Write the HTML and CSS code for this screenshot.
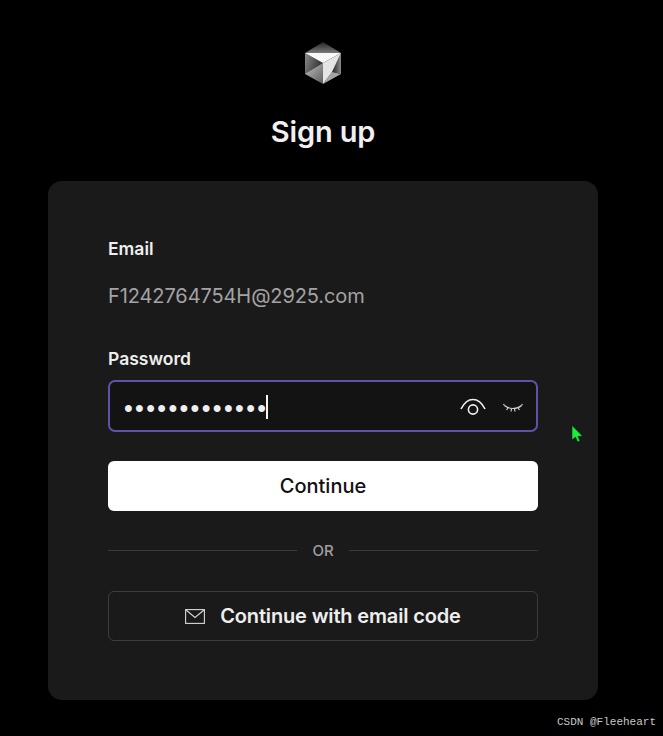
FILE: index.html
```html
<!DOCTYPE html>
<html lang="en">
  <head>
    <meta charset="UTF-8" />
    <meta name="viewport" content="width=device-width, initial-scale=1.0" />
    <title>Sign up</title>
    <link rel="stylesheet" href="styles.css">
  </head>
  <body>
    <div class="page">
      <svg class="logo" width="40" height="44" viewBox="0 0 40 44">
        <defs>
          <linearGradient id="leftFace" x1="0" y1="0" x2="1" y2="0.4">
            <stop offset="0" stop-color="#8c8c8c" />
            <stop offset="1" stop-color="#2e2e2e" />
          </linearGradient>
          <linearGradient id="topFace" x1="0" y1="0" x2="0" y2="1">
            <stop offset="0" stop-color="#222" />
            <stop offset="1" stop-color="#7a7a7a" />
          </linearGradient>
          <linearGradient id="rightFace" x1="0" y1="0" x2="1" y2="0">
            <stop offset="0" stop-color="#222" />
            <stop offset="1" stop-color="#8a8a8a" />
          </linearGradient>
          <linearGradient id="bottomFace" x1="0" y1="0" x2="1" y2="1">
            <stop offset="0" stop-color="#c4c4c4" />
            <stop offset="1" stop-color="#5a5a5a" />
          </linearGradient>
        </defs>
        <polygon points="19,1 37,12 1,12" fill="url(#topFace)" />
        <polygon points="1,12 19,22 19,33 1,33" fill="url(#leftFace)" />
        <polygon points="1,33 19,22 19,43" fill="url(#bottomFace)" />
        <polygon points="37,12 37,33 28,31" fill="url(#rightFace)" />
        <polygon points="37,33 28,31 19,43" fill="#a5a5a5" />
        <polygon points="1,12 37,12 19,22" fill="#f8f8f8" />
        <polygon points="37,12 19,22 19,43 28,31" fill="#e4e4e4" />
      </svg>
      <h1 class="title">Sign up</h1>

      <div class="card">
        <div class="label">Email</div>
        <div class="email-value">F1242764754H@2925.com</div>

        <div class="label">Password</div>
        <div class="password-box">
          <span class="dots">•••••••••••••</span>
          <span class="caret"></span>
          <div class="box-icons">
            <svg class="eye-open" width="26" height="18" viewBox="0 0 26 18" fill="none" stroke="#f0f0f0" stroke-width="1.6">
              <path d="M1 12C4 6 8 2.500 13 2.500S22 6 25 12" />
              <circle cx="13" cy="12.500" r="4.600" />
            </svg>
            <svg class="eye-closed" width="20" height="12" viewBox="0 0 20 12" fill="none" stroke="#d4d4d4" stroke-width="1.2">
              <path d="M1.500 2.500C6 6.500 14 6.500 18.500 2.500" />
              <path d="M1.500 2.500 0.500 1M18.500 2.500l1-1.500M5 5 3.500 7M15 5l1.500 2M8.500 6 8 8.500M11.500 6l.5 2.500" />
            </svg>
          </div>
        </div>

        <button class="continue-btn">Continue</button>

        <div class="divider">
          <span class="line"></span>
          <span class="or">OR</span>
          <span class="line"></span>
        </div>

        <button class="code-btn">
          <svg width="20" height="15" viewBox="0 0 20 15" fill="none" stroke="#d8d8d8" stroke-width="1.1">
            <rect x="0.600" y="0.600" width="18.800" height="13.800" />
            <path d="M1 1l9 7.500L19 1" />
          </svg>
          Continue with email code
        </button>
      </div>
    </div>

    <svg class="cursor" width="12" height="18" viewBox="0 0 12 18">
      <polygon points="1,0.500 1,15 4.500,12 6.500,17 9,16 7,11.500 11.500,11" fill="#17ee3e" stroke="#0a0a0a" stroke-width="0.500" />
    </svg>
    <div class="watermark">CSDN @Fleeheart</div>
  </body>
</html>
```

FILE: styles.css
```css
html,
body {
  margin: 0;
  height: 736px;
  overflow: hidden;
  background-color: #000;
}

body {
  position: relative;
  font-family: Inter, "Liberation Sans", sans-serif;
  color: #f0f0f0;
}

.page {
  display: flex;
  flex-direction: column;
  align-items: center;
  width: 646px;
  padding-top: 41px;
}

.logo {
  display: block;
  margin-left: 2px;
}

.title {
  margin: 29px 0 0;
  font-size: 29px;
  line-height: 36px;
  font-weight: 600;
  letter-spacing: -0.15px;
}

.card {
  box-sizing: border-box;
  width: 550px;
  height: 519px;
  margin-top: 31px;
  padding: 56px 60px 0;
  background-color: #1a1a1a;
  border-radius: 14px;
}

.label {
  font-size: 17.5px;
  line-height: 24px;
  font-weight: 600;
  color: #eee;
}

.email-value {
  margin: 23px 0 39px;
  font-size: 20px;
  line-height: 24px;
  letter-spacing: -0.1px;
  color: #a3a3a3;
}

.password-box {
  box-sizing: border-box;
  display: flex;
  align-items: center;
  height: 52px;
  margin-top: 9px;
  padding: 0 13px 0 14px;
  background-color: #131313;
  border: 2px solid #5f52a8;
  border-radius: 7px;
}

.dots {
  margin-top: 3px;
  font-family: "Liberation Sans", sans-serif;
  font-size: 25px;
  letter-spacing: 2.35px;
  line-height: 24px;
  color: #eee;
}

.caret {
  width: 2px;
  height: 24px;
  margin-top: 1px;
  margin-left: -2px;
  background-color: #f4f4f4;
}

.box-icons {
  display: flex;
  align-items: center;
  gap: 17px;
  margin-left: auto;
}

.eye-closed {
  margin-top: 6px;
}

.continue-btn {
  display: block;
  width: 100%;
  height: 50px;
  margin-top: 29px;
  border: none;
  border-radius: 6px;
  background-color: #fff;
  color: #111;
  font-family: inherit;
  font-size: 20px;
  font-weight: 500;
}

.divider {
  display: flex;
  align-items: center;
  gap: 15px;
  height: 20px;
  margin: 29px 0 31px;
}

.line {
  flex: 1;
  height: 1px;
  background-color: #3a3a3a;
}

.or {
  font-size: 15px;
  font-weight: 500;
  color: #a0a0a0;
}

.code-btn {
  display: flex;
  align-items: center;
  justify-content: center;
  gap: 15px;
  box-sizing: border-box;
  width: 100%;
  height: 50px;
  border: 1px solid #3c3c3c;
  border-radius: 6px;
  background-color: transparent;
  color: #eee;
  font-family: inherit;
  font-size: 20px;
  font-weight: 600;
  letter-spacing: -0.15px;
}

/* screenshot overlays */
.cursor {
  position: absolute;
  left: 571px;
  top: 425px;
}

.watermark {
  position: absolute;
  right: 7px;
  bottom: 6px;
  font-family: "Liberation Mono", monospace;
  font-size: 11px;
  line-height: 16px;
  color: #c8c8c8;
}
```
